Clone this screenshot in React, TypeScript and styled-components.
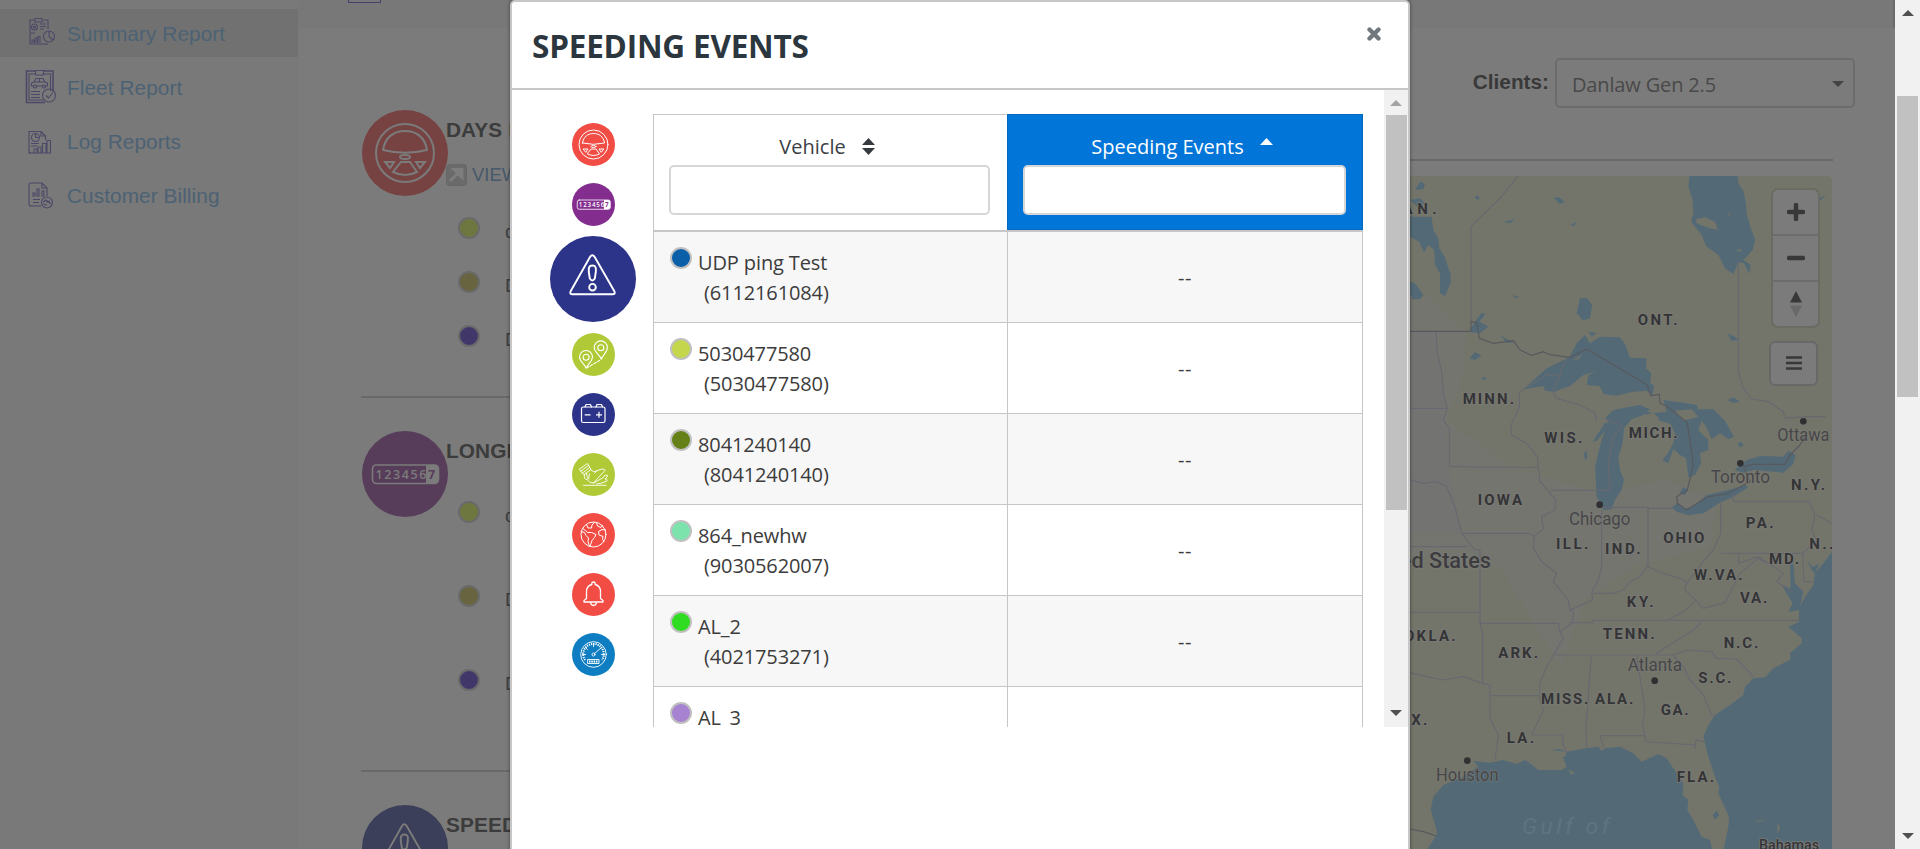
import React from "react";
import styled, { createGlobalStyle } from "styled-components";

const GlobalStyle = createGlobalStyle`
  * { box-sizing: border-box; }
  body { margin: 0; background: #7b7b7b; overflow: hidden; }
`;

const UI = `"Open Sans", "Noto Sans", sans-serif`;
const ARIAL = `"Liberation Sans", Arial, sans-serif`;

/* ---------- page shell ---------- */

const Screen = styled.div`
  position: relative;
  display: flex;
  width: 1920px;
  height: 849px;
  overflow: hidden;
  background: #7b7b7b;
  font-family: ${ARIAL};
`;

const Sidebar = styled.nav`
  display: flex;
  flex-direction: column;
  gap: 6px;
  width: 298px;
  padding-top: 9px;
  background: #797979;
  flex: none;
`;

const NavItem = styled.a<{ $active?: boolean }>`
  display: flex;
  align-items: center;
  height: 48px;
  padding-left: 25px;
  gap: 10px;
  font-size: 20.8px;
  line-height: 24px;
  letter-spacing: 0.07px;
  color: #4c6274;
  background: ${(p) => (p.$active ? "#717171" : "transparent")};
  span { padding-top: 2px; }
`;

const NavIcon = styled.svg`
  width: 32px;
  height: 36px;
  flex: none;
  fill: none;
  stroke: #4c4968;
  stroke-width: 1.1;
`;

const Main = styled.main`
  display: flex;
  flex-direction: column;
  width: 1597px;
  flex: none;
`;

const TopStrip = styled.div`
  height: 28px;
  flex: none;
  padding-left: 50px;
  background: #787878;
  border-right: 2px solid #6b6b6b;
`;

const StripBox = styled.div`
  width: 33px;
  height: 3px;
  border: 1px solid #46426b;
  border-top: 0;
`;

const Columns = styled.div`
  display: flex;
  height: 821px;
`;

const Reports = styled.div`
  width: 941px;
  padding: 49px 0 0 63px;
  flex: none;
`;

const Section = styled.section<{ $height: number }>`
  display: flex;
  height: ${(p) => p.$height}px;
  padding: 33px 0 0 1px;
  border-bottom: 2px solid #696969;
`;

const SectionBody = styled.div`
  padding-top: 8px;
  margin-left: -2px;
`;

const SectionTitle = styled.h3`
  margin: 0;
  font-size: 20.8px;
  line-height: 24px;
  letter-spacing: 0.1px;
  color: #3c3c3c;
  white-space: nowrap;
`;

const ViewRow = styled.a`
  display: flex;
  gap: 5px;
  height: 22px;
  margin-top: 22px;
  margin-bottom: 8px;
  font-size: 18.4px;
  line-height: 21px;
  color: #47586a;
`;

const List = styled.ul<{ $gap: number }>`
  list-style: none;
  margin: 0;
  padding: 7px 0 0 12px;
  li {
    display: flex;
    align-items: center;
    gap: 25px;
    height: ${(p) => p.$gap}px;
    font-size: 19px;
    color: #3f3f3f;
  }
  li span { padding-top: 8px; }
`;

const Dot = styled.i<{ $color: string; $border?: string }>`
  display: block;
  width: 22px;
  height: 22px;
  flex: none;
  border-radius: 50%;
  border: 2px solid ${(p) => p.$border || "#6a6a6a"};
  background: ${(p) => p.$color};
`;

const Right = styled.div`
  display: flex;
  flex-direction: column;
  width: 656px;
  padding-top: 30px;
`;

const ClientRow = styled.div`
  display: flex;
  align-items: center;
  justify-content: flex-end;
  gap: 6px;
  height: 50px;
  padding-right: 40px;
`;

const ClientLabel = styled.label`
  font-weight: 700;
  font-size: 20.8px;
  line-height: 24px;
  padding-bottom: 2px;
  color: #393939;
`;

const Select = styled.div`
  display: flex;
  align-items: center;
  justify-content: space-between;
  width: 300px;
  height: 50px;
  padding: 2px 9px 0 15px;
  border: 2px solid #6c6c6c;
  border-radius: 5px;
  font-family: ${UI};
  font-size: 20px;
  letter-spacing: -0.15px;
  color: #494949;
`;

const Rule = styled.hr`
  width: 534px;
  height: 2px;
  margin: 51px 0 15px 60px;
  border: 0;
  background: #686868;
`;

const MapPanel = styled.div`
  width: 532px;
  height: 673px;
  margin-left: 61px;
  border-radius: 0 5px 0 0;
  overflow: hidden;
  position: relative;
  svg.chart { display: block; }
`;

const MapControls = styled.div`
  position: absolute;
  top: 12px;
  right: 12px;
  width: 49px;
`;

const ZoomGroup = styled.div`
  display: flex;
  flex-direction: column;
  height: 140px;
  border: 2px solid #6a6b62;
  border-radius: 7px;
  overflow: hidden;
  background: #7b7b7b;
`;

const MapButton = styled.div`
  display: flex;
  align-items: center;
  justify-content: center;
  height: 46px;
  border-bottom: 2px solid #6d6d6d;
  &:last-child { border-bottom: 0; height: 44px; }
`;

const MenuButton = styled.div`
  display: flex;
  align-items: center;
  justify-content: center;
  width: 49px;
  height: 45px;
  margin: 13px 0 0 -2px;
  padding-bottom: 1px;
  border: 2px solid #686868;
  border-radius: 6px;
  background: #7b7b7b;
`;

const PageScroll = styled.div`
  display: flex;
  flex-direction: column;
  justify-content: space-between;
  align-items: center;
  width: 25px;
  height: 849px;
  padding: 10px 0;
  background: #f1f1f1;
  flex: none;
`;

const Thumb = styled.div<{ $height: number; $top: number }>`
  width: 21px;
  height: ${(p) => p.$height}px;
  margin-top: ${(p) => p.$top}px;
  margin-bottom: auto;
  background: #c1c1c1;
`;

/* ---------- modal ---------- */

const Modal = styled.div`
  position: absolute;
  left: 510px;
  top: 0;
  width: 900px;
  height: 900px;
  background: #fff;
  border: 2px solid #c6c6c6;
  border-radius: 5px;
  box-shadow: 0 0 3px 1px rgba(0, 0, 0, 0.3);
  font-family: ${UI};
`;

const ModalHeader = styled.header`
  display: flex;
  justify-content: space-between;
  height: 88px;
  padding: 22px 27px 0 20px;
  border-bottom: 2px solid #c6c6c6;
`;

const ModalTitle = styled.h1`
  margin: 0;
  font-size: 31.5px;
  line-height: 44px;
  letter-spacing: -0.2px;
  font-weight: 700;
  color: #2c363e;
`;

const Close = styled.svg`
  width: 14px;
  height: 14px;
  margin-top: 3px;
`;

const ModalBody = styled.div`
  display: flex;
  height: 637px;
  overflow: hidden;
`;

const IconRail = styled.div`
  display: flex;
  flex-direction: column;
  align-items: center;
  gap: 17px;
  width: 141px;
  padding: 33px 0 0 21px;
  flex: none;
`;

const RailIcon = styled.svg<{ $large?: boolean }>`
  display: block;
  width: ${(p) => (p.$large ? 86 : 43)}px;
  height: ${(p) => (p.$large ? 86 : 43)}px;
  margin: ${(p) => (p.$large ? "-7px 0 -6px" : "0")};
  flex: none;
  fill: none;
  stroke: #fff;
  stroke-linecap: round;
  stroke-linejoin: round;
`;

const BackIcon = styled(RailIcon)`
  margin: 0;
  stroke: #7b7b7b;
`;

const Table = styled.div`
  display: flex;
  flex-direction: column;
  width: 710px;
  margin-top: 24px;
  flex: none;
`;

const TableRow = styled.div<{ $striped?: boolean }>`
  display: grid;
  grid-template-columns: 354px 356px;
  height: 91px;
  flex: none;
  border-bottom: 1px solid #c6c6c6;
  border-right: 1px solid #c6c6c6;
  background: ${(p) => (p.$striped ? "#f7f7f7" : "#fff")};
`;

const HeadRow = styled(TableRow)`
  height: 118px;
  border-bottom: 2px solid #c6c6c6;
  border-right: 0;
`;

const HeadCell = styled.div<{ $sorted?: boolean }>`
  display: flex;
  flex-direction: column;
  padding: 17px 16px 0 ${(p) => (p.$sorted ? 15 : 15)}px;
  border: 1px solid ${(p) => (p.$sorted ? "#0267bf" : "#c6c6c6")};
  border-right-color: ${(p) => (p.$sorted ? "#0267bf" : "transparent")};
  border-bottom-width: ${(p) => (p.$sorted ? 1 : 0)}px;
  background: ${(p) => (p.$sorted ? "#0275d8" : "#fff")};
  color: ${(p) => (p.$sorted ? "#fff" : "#3b4045")};
`;

const HeadLabel = styled.div`
  display: flex;
  align-items: center;
  justify-content: center;
  gap: 16px;
  height: 28px;
  margin-bottom: 5px;
  padding-right: 5px;
  font-size: 20px;
`;

const Filter = styled.input`
  width: 100%;
  height: 50px;
  border: 2px solid #d6d6d6;
  border-radius: 5px;
  background: #fff;
`;

const Cell = styled.div`
  display: flex;
  gap: 6px;
  padding: 15px 0 0 16px;
  border-left: 1px solid #c6c6c6;
  font-size: 20px;
  line-height: 30px;
  letter-spacing: -0.12px;
  color: #3c3c3c;
`;

const ValueCell = styled(Cell)`
  align-items: center;
  justify-content: center;
  padding: 1px 1px 0 0;
  letter-spacing: 0.6px;
`;

const VehicleName = styled.div`
  padding-top: 1px;
  div + div { padding-left: 6px; }
`;

const BodyScroll = styled.div`
  display: flex;
  flex-direction: column;
  align-items: center;
  width: 24px;
  height: 637px;
  margin-left: auto;
  padding: 10px 0 11px;
  background: #f1f1f1;
`;

const ArrowSvg = styled.svg`
  flex: none;
`;

const Arrow = ({ color, down }: { color: string; down?: boolean }) => (
  <ArrowSvg width="12" height="6" viewBox="0 0 12 6">
    <path d={down ? "M0 0H12L6 6Z" : "M0 6H12L6 0Z"} fill={color} />
  </ArrowSvg>
);

/* ---------- icons ---------- */

const steering = (
  <g strokeWidth="2">
    <circle r="29" />
    <path d="M-22 -3C-20 -16 -11 -22 0 -22S20 -16 22 -3Q0 2.500 -22 -3Z" />
    <ellipse cy="4" rx="5" ry="2" />
    <path d="M-4 9H5L12 19Q0 25 -12 19ZM-20 9H-11L-15 15ZM20 9H11L15 15Z" strokeLinejoin="miter" />
  </g>
);

const odometer = (ink: string, bg: string) => (
  <g strokeWidth="1.600">
    <rect x="-32.500" y="-9" width="66" height="18.500" rx="4" />
    <path d="M21 -9H29.500Q33.500 -9 33.500 -5V5.500Q33.500 9.500 29.500 9.500H21Z" fill={ink} stroke="none" />
    <text x="-29.500" y="4.800" fill={ink} stroke="none" fontFamily="Open Sans" fontWeight="600" fontSize="12.500" textLength="51">
      123456
    </text>
    <text x="23" y="4.800" fill={bg} stroke="none" fontFamily="Open Sans" fontWeight="700" fontSize="12.500">
      7
    </text>
  </g>
);

const alertSign = (
  <g strokeWidth="1.900">
    <path d="M-3 -22Q-0.700 -25.500 1.700 -22L21.500 12.500Q22.500 15.300 19.500 15.300H-20.500Q-23.500 15.300 -22.500 12.500Z" />
    <path d="M-0.700 -13.500C3 -13.500 3.200 -11 2.800 -7L1.800 -0.500Q-0.700 3.500 -3.200 -0.500L-4.200 -7C-4.500 -11 -4 -13.500 -0.700 -13.500Z" />
    <circle cx="-0.500" cy="8.200" r="3.300" />
  </g>
);

const pins = (
  <g strokeWidth="1.100">
    <path d="M-7.300 13.800C-9 9 -14 7 -14 2.500A6.500 6.500 0 0 1 -1 2.500C-1 7 -5.500 9 -7.300 13.800Z" />
    <circle cx="-7.400" cy="2.700" r="3" />
    <path d="M7.800 4.800C6 0 0.700 -2.500 0.700 -7A6.600 6.600 0 0 1 13.900 -7C13.900 -2.500 9.500 0 7.800 4.800Z" />
    <circle cx="7.300" cy="-6.800" r="3" />
    <path d="M-6.500 13.300L7 5.500" strokeDasharray="2.400 1.600" />
  </g>
);

const battery = (
  <g strokeWidth="1.200">
    <rect x="-12" y="-7.500" width="23.500" height="15.500" rx="1.800" />
    <path d="M-8.500 -7.500L-7.500 -10H-3L-2 -7.500M2.500 -7.500L3.500 -10H8L9 -7.500" />
    <path d="M-8.800 0.300H-3M2.500 0.300H8.500M5.500 -2.700V3.300" strokeLinecap="butt" />
  </g>
);

const pedal = (
  <g strokeWidth="0.900">
    <path d="M-14 -5.500L-6 -11L-2.500 -5L-9.500 0ZM-12.500 -3.500L-5.200 -9M-11 -1.500L-4 -7" />
    <path d="M-9 0Q-10 5 -6.500 5Q-4 3.500 -4 -0.500M-7 -1.500Q-7 3 -4.500 4.500M-3 -5Q0 -1.500 4 -4L8.500 -5.500Q12 -5.500 11.500 -4L4 4L0 8.500Q-4 9 -6.500 5M4 -4L1 -1.500" />
    <path d="M0 8.500L10 3L10.500 1.500Q12 0 14 1Q14 3 11.500 4.500Q14 4 13.500 6.500Q9 9 3 9.500M-10 10.800H12.500" />
  </g>
);

const globe = (
  <g strokeWidth="1">
    <circle r="12.500" />
    <path d="M-11 -6L-8 -4L-6 -2L-2 -2L2.500 0L1 3L-1.500 6L-3.500 12M-12.400 -3L-9 -2L-7.500 1L-5 3.500L-5.500 7L-4 12" />
    <path d="M-7 -10L-5.500 -6.500L-2 -6.500L-1.500 -9.500L1 -12.300M3 -12L4 -8.500L7.500 -7L9 -9M12 -4.500L8.500 -5L5 -3L5.500 0.500L9.500 2L9 5L10.500 7" />
  </g>
);

const bell = (
  <g strokeWidth="1.300">
    <path d="M-9.500 7.500V6L-7 4V-3Q-7 -8.500 -1.700 -10V-11.500Q0 -13.500 1.700 -11.500V-10Q7 -8.500 7 -3V4L9.500 6V7.500ZM-3 8Q-2.500 11 0 11T3 8" />
  </g>
);

const gauge = (
  <g strokeWidth="0.900">
    <circle r="12.800" />
    <path d="M-8.500 5.500A10.300 10.300 0 1 1 8.500 5.500" strokeWidth="2" strokeDasharray="1.200 1" strokeLinecap="butt" />
    <path d="M1 -1L7.500 -6.500M-11 0H-8M8 0H11M0 -11V-8M-8 -7L-6 -5" />
    <circle r="1.500" />
    <rect x="-5.500" y="5" width="11" height="4" />
    <path d="M-4.500 7H5" strokeWidth="2.200" strokeDasharray="1.500 0.800" strokeLinecap="butt" />
  </g>
);

const rail: { color: string; art: React.ReactNode; scale: number; large?: boolean }[] = [
  { color: "#f14d45", art: steering, scale: 86 },
  { color: "#832e8f", art: odometer("#fff", "#832e8f"), scale: 86 },
  { color: "#2c348a", art: alertSign, scale: 86, large: true },
  { color: "#afca36", art: pins, scale: 43 },
  { color: "#2c348a", art: battery, scale: 43 },
  { color: "#afca36", art: pedal, scale: 43 },
  { color: "#f14d45", art: globe, scale: 43 },
  { color: "#f14d45", art: bell, scale: 43 },
  { color: "#0f7dc2", art: gauge, scale: 43 },
];

const box = (s: number) => `${-s / 2} ${-s / 2} ${s} ${s}`;

const SectionIcon = ({ color, children }: { color: string; children: React.ReactNode }) => (
  <BackIcon $large viewBox={box(86)}>
    <circle r="43" fill={color} stroke="none" />
    {children}
  </BackIcon>
);

const navItems = [
  {
    label: "Summary Report",
    art: (
      <>
        <path d="M10 5H5V29H23M18 5H23V14M10 3.500H17V7H10Z" />
        <circle cx="9.500" cy="12" r="3" /><circle cx="9.500" cy="12" r="1" />
        <path d="M15 9H21M15 11.500H21M15 14H19M6 18H10M7 28V25H9V28M10 28V23H12V28M13 28V21.500H15V28" />
        <circle cx="24" cy="21.500" r="5.500" /><path d="M24 16V21.500L28 25" />
      </>
    ),
  },
  {
    label: "Fleet Report",
    art: (
      <>
        <path d="M10 2H1.500V33.500H20M19 2H28V23" strokeWidth="1.600" />
        <path d="M10 5H4V31H19M19 5H25.500V22M10.500 1.500H18.500V6H10.500Z" />
        <path d="M6.500 17V14L9 13L11 9.500H18L20 13L22.500 14V17H20M17.500 17H11.500M9 17H6.500M9 13H20M14.500 9.500V13" />
        <circle cx="10" cy="17.500" r="1.500" /><circle cx="19" cy="17.500" r="1.500" />
        <path d="M6 22.500H15M6 25.500H15M6 28.500H15" />
        <circle cx="24" cy="26.500" r="6.500" /><path d="M21 26.500L23.500 29L27.500 24" />
      </>
    ),
  },
  {
    label: "Log Reports",
    art: (
      <>
        <path d="M6 30H4V8.500H16L20.500 13V17M16 8.500V13H20.500" />
        <circle cx="10.500" cy="14.500" r="4" /><path d="M10.500 10.500V14.500H14.500M6 20.500H14M6 23H12M9 30V26H12V30M13 30V24H16V30M17.500 30V20.500H21V30M22 30V17.500H25.500V30H4" />
      </>
    ),
  },
  {
    label: "Customer Billing",
    art: (
      <>
        <path d="M16 29H6Q4 29 4 27V8Q4 6 6 6H17L22 11V19M17 6V11H22M8 19V16H10V19ZM12 19V12H14V19ZM17 19V14H19V19ZM8 22.500H15M8 25.500H14" />
        <circle cx="22" cy="25.500" r="5.500" /><path d="M18 25L21 23L26 27M18 27L22 28M21 25L25 24" />
      </>
    ),
  },
];

/* ---------- map ---------- */

const lakes = [
  "M30 650H95L100 690L115 715L118 745L134 770L150 820H152V850L135 888L120 880V820L105 795L102 750L85 735L72 758L58 725L-10 690Z",
  "M45 570L60 545L75 552L70 568ZM30 600L60 595L75 610L50 618ZM30 845L45 850L70 885L60 898H38L30 880Z",
  "M868 528H1013L1015 550L1030 572L1038 610L1040 640L1052 685L1066 720L1058 750L1040 770L1030 780L1052 795L1048 822L1032 790L1015 787L1000 822L975 805L955 765L918 738L905 705L873 665L880 640L878 600L865 560Z",
  "M370 1168L440 1105L508 1072L530 1030L555 1005L570 1030L600 1010L660 1012L675 1032L690 1073L740 1075L738 1105L754 1120L750 1150L763 1157L757 1185L740 1172L700 1175L650 1187L612 1183L598 1158L560 1155L565 1125L590 1113L550 1125L510 1158L462 1175L435 1172L430 1158Z",
  "M565 995L590 998L575 1010ZM540 895L560 893L577 915L570 955L550 962L530 940ZM460 593L478 592L494 606L480 612ZM310 666L345 658L330 670ZM510 674L530 667L522 678ZM224 592L232 586L240 594L232 600ZM335 885L357 890L345 894ZM245 938L256 942L238 965L265 980L240 1000L207 995L225 965ZM300 1005L320 1018L345 1027L320 1028ZM208 1075L225 1057L245 1066L225 1080ZM243 1134L252 1130L260 1137L252 1141ZM982 1000L1000 1008L1018 1020L995 1022ZM982 1200L1000 1192L1020 1205L1000 1208ZM1172 565L1186 564L1180 574ZM1255 595L1278 586L1260 602Z",
  "M605 1320L625 1262L615 1255L640 1230L690 1220L720 1215L750 1228L730 1245L695 1258L672 1285L668 1330L655 1370L660 1410L672 1440L665 1470L645 1500L635 1528L610 1530L603 1510L590 1490L585 1400L592 1370Z",
  "M578 1325L615 1268L632 1272L590 1322ZM552 1360L560 1350L562 1372L556 1383Z",
  "M690 1222L760 1240L800 1235L790 1200L850 1208L890 1215L895 1228L940 1228L975 1262L1002 1310L985 1318L960 1300L935 1318L918 1280L905 1262L895 1290L925 1320V1350L900 1360L903 1390L885 1425L865 1432L858 1375L840 1365L820 1347L805 1390L787 1380L800 1365L820 1330L825 1300L812 1272L780 1262Z",
  "M838 1480L850 1462L865 1470L855 1485ZM1012 1332L1022 1325L1032 1335L1020 1342Z",
  "M815 1522L835 1508L850 1526L880 1520L920 1485L985 1470L1035 1455L1045 1462L1000 1490L960 1508L910 1540L865 1546L830 1535Z",
  "M1003 1410L1040 1380L1080 1368L1150 1370L1165 1352L1187 1365L1180 1392L1150 1418L1060 1410L1030 1418Z",
  "M1300 1650L1270 1690L1245 1720L1240 1755L1215 1790L1197 1825V1865L1165 1880L1205 1915V1930L1170 1960L1172 1978L1120 2005L1095 2032L1060 2035L1035 2060L1030 2085L990 2115L945 2145L925 2175L910 2210L925 2270L945 2330L958 2360L955 2380L987 2450L985 2480L970 2550H1300Z",
  "M937 2550L930 2520L905 2510L880 2460L862 2430L865 2400L848 2385L850 2350L830 2320L800 2275L775 2262L725 2285L700 2260L660 2240L615 2245L605 2253L595 2240L560 2245L500 2255L480 2248L450 2250L490 2275L500 2300L485 2310L415 2310L390 2290L375 2280L350 2292L310 2280L270 2288L220 2283L235 2300L190 2330L130 2355L100 2390L92 2430L110 2490V2505L80 2550Z",
  "M1170 1690L1180 1690L1185 1750L1210 1775L1198 1830L1165 1835L1178 1810L1145 1755L1172 1765ZM1220 1680L1238 1702L1258 1690L1245 1722L1235 1710ZM938 2445L950 2432L958 2445L945 2460Z",
];

const borders = [
  "M354 528L300 595L213 680V965M1015 790V1115L1030 1165L1055 1197L1105 1205L1150 1235L1155 1255L1215 1250L1278 1250",
  "M108 995L112 1060L125 1115L130 1180L142 1225L130 1260L148 1285V1400M30 1225H142",
  "M148 1400L415 1402M415 1402L412 1370L380 1330L335 1305L333 1275L358 1222V1180L370 1168L440 1125H480L500 1072M480 1125L458 1175L470 1195L540 1215L585 1240L590 1260",
  "M415 1402L420 1445L468 1500L465 1530L425 1550L430 1585L403 1610L400 1645L425 1685L470 1720L460 1745L505 1800L510 1830L522 1840L515 1870L480 1895",
  "M30 1440L70 1450L110 1445L140 1460L165 1520L175 1560L185 1600L225 1650H240V1870M185 1600H390L403 1610M30 1640H205M30 1837H240",
  "M452 1471H630L625 1390L640 1310L668 1275L620 1262M605 1530V1700L595 1740L575 1775L578 1800L510 1830M605 1522H744V1700L740 1700L720 1730L690 1745L670 1770L640 1780L580 1780M744 1525H815",
  "M744 1700L790 1720L840 1735L858 1745L860 1750L905 1690L940 1650L962 1600V1510M962 1660H1208L1212 1745H1240M1000 1480V1505H1228L1245 1545L1235 1590L1250 1620L1208 1660M1250 1545L1296 1570",
  "M860 1745L855 1770L888 1802L850 1835L800 1862M888 1802L910 1825L975 1808L1020 1720L1075 1675L1100 1690M1016 1660V1690L1075 1670L1150 1720L1130 1745L1175 1775",
  "M240 1870H475L480 1895M510 1868H578V1861H1197M905 1865L880 1890L800 1940L770 1960V1965",
  "M240 1870L248 1900V2050L270 2055V2155L295 2205L285 2280M270 2087H415M30 2018L80 2030L130 2040L190 2030L248 2050",
  "M480 1895L490 1915L460 1965L440 2000L420 2050L418 2090L430 2130L395 2205H490L487 2230L500 2255M465 1965H820L865 1950L935 1955L950 1975L1010 1977L1062 2032",
  "M574 1965L558 2180L560 2245M710 1965L735 2130L728 2175L738 2225L885 2235V2245L888 2220L912 2225M600 2207H732M820 1965L850 2000L870 2040L910 2085L935 2145H945M600 2207L610 2240",
];

const national = [
  "M-100 994H213V965L230 968L238 1015L280 1030L340 1022L360 1050L395 1066L430 1055L450 1064L510 1072L560 1047L742 1155L752 1187L778 1183L780 1210L800 1218L862 1268L880 1395L862 1470L830 1490L832 1510L860 1530L920 1492L985 1480L1050 1445L1030 1400L1060 1393H1155L1170 1365L1200 1335L1215 1310",
  "M30 2487L70 2495L110 2508",
];

const states: [string, number, number, number][] = [
  ["MAN.", -46, 643, 156], ["ONT.", 713, 974, 120], ["MINN.", 188, 1211, 154], ["WIS.", 433, 1329, 114],
  ["MICH.", 686, 1314, 147], ["IOWA", 233, 1515, 133], ["N.Y.", 1173, 1469, 102], ["PA.", 1037, 1584, 84],
  ["OHIO", 790, 1630, 123], ["ILL.", 468, 1648, 97], ["IND.", 615, 1662, 107], ["N..", 1228, 1647, 72],
  ["MD.", 1107, 1692, 90], ["W.VA.", 882, 1740, 146], ["VA.", 1020, 1810, 82], ["KY.", 680, 1820, 81],
  ["TENN.", 608, 1917, 156], ["OKLA.", 12, 1923, 155], ["ARK.", 295, 1974, 119], ["N.C.", 971, 1945, 104],
  ["S.C.", 895, 2048, 99], ["MISS.", 423, 2112, 142], ["ALA.", 585, 2112, 115], ["GA.", 782, 2144, 84],
  ["TEX.", -32, 2176, 114], ["LA.", 320, 2229, 82], ["FLA.", 830, 2347, 112],
];

const cities: [string, number, number, number, number, number][] = [
  ["Ottawa", 1132, 1323, 156, 1210, 1264], ["Toronto", 932, 1450, 178, 1021, 1390],
  ["Chicago", 507, 1574, 184, 599, 1514], ["Atlanta", 683, 2014, 163, 764, 2042],
  ["Houston", 108, 2342, 188, 202, 2282],
];

const MapDrawing = () => (
  <svg className="chart" width="532" height="673" viewBox="-300 528 1596 2019">
    <rect x="-300" y="528" width="1596" height="2019" fill="#74756a" />
    <path d="M-100 900L90 890L200 1000L185 1150L140 1260L330 1400L600 1480L800 1440L950 1500L930 1640L700 1700L560 1800L480 2000L300 1700L-100 1650Z" fill="#75756f" />
    <path d="M30 995H108L130 1180L145 1400L180 1600H30Z" fill="#737472" />
    <g fill="#536a76">
      {lakes.map((d) => <path key={d} d={d} />)}
    </g>
    <g fill="#74756a">
      <path d="M888 658L915 652L945 665L953 690L925 683L890 670ZM988 635L992 655L986 645ZM1008 752L1022 746L1024 755Z" />
      <path d="M518 1080L548 1062L535 1078ZM735 1245L760 1238L780 1258L740 1262ZM825 1232L875 1228L895 1250L850 1262Z" />
      <path d="M1060 2463L1095 2461L1080 2465ZM1133 2470L1140 2480L1132 2502Z" />
      <path d="M445 2250L500 2255L495 2270L470 2275ZM505 2308L523 2318L515 2325Z" />
    </g>
    <g fill="none" stroke="#686870" strokeWidth="3.500" strokeLinejoin="round">
      {borders.map((d) => <path key={d} d={d} />)}
    </g>
    <g fill="none" stroke="#58595e" strokeWidth="3.500" strokeLinejoin="round">
      {national.map((d) => <path key={d} d={d} />)}
    </g>
    <g fontFamily="Roboto, sans-serif" paintOrder="stroke" stroke="#7b7b77" strokeWidth="5" strokeLinejoin="round">
      <g fontSize="45" fontWeight="700" fill="#343436">
        {states.map(([t, x, y, w]) => <text key={t + x} x={x} y={y} textLength={w}>{t}</text>)}
      </g>
      <g fontSize="54" fill="#464648" strokeWidth="3">
        {cities.map(([t, x, y, w]) => (
          <text key={t} x={x} y={y} textLength={w} lengthAdjust="spacingAndGlyphs">{t}</text>
        ))}
      </g>
      <text x="273" y="1704" textAnchor="end" fontSize="65" fontWeight="500" fill="#3c3c3f">United States</text>
      <text x="1077" y="2550" fontSize="43" fontWeight="500" fill="#343436" textLength="180">Bahamas</text>
    </g>
    <text x="366" y="2502" fontFamily="Roboto, sans-serif" fontStyle="italic" fontSize="68" fill="#5f7480" textLength="262">Gulf of</text>
    <g fill="#303032">
      {cities.map(([t, , , , x, y]) => <circle key={t} cx={x} cy={y} r="10" />)}
    </g>
  </svg>
);

/* ---------- data ---------- */

const vehicles = [
  { name: "UDP ping Test", id: "6112161084", color: "#0b5ea8" },
  { name: "5030477580", id: "5030477580", color: "#c3d64c" },
  { name: "8041240140", id: "8041240140", color: "#658016" },
  { name: "864_newhw", id: "9030562007", color: "#7ce3ad" },
  { name: "AL_2", id: "4021753271", color: "#30dc21" },
  { name: "AL_3", id: "", color: "#a682d0" },
];

const dotColors = ["#6f7740", "#67643f", "#413769"];
const listItems = ["dan", "Demo", "Danlaw"];

const ReportList = ({ gap }: { gap: number }) => (
  <List $gap={gap}>
    {dotColors.map((c, i) => (
      <li key={c}>
        <Dot $color={c} />
        <span>{listItems[i]}</span>
      </li>
    ))}
  </List>
);

export default function App() {
  return (
    <>
      <GlobalStyle />
      <Screen>
        <Sidebar>
          {navItems.map((n, i) => (
            <NavItem key={n.label} $active={i === 0}>
              <NavIcon viewBox="0 0 32 36">{n.art}</NavIcon>
              <span>{n.label}</span>
            </NavItem>
          ))}
        </Sidebar>

        <Main>
          <TopStrip>
            <StripBox />
          </TopStrip>
          <Columns>
            <Reports>
              <Section $height={321}>
                <SectionIcon color="#774342">{steering}</SectionIcon>
                <SectionBody>
                  <SectionTitle>DAYS DRIVEN</SectionTitle>
                  <ViewRow>
                    <svg width="21" height="22" viewBox="0 0 21 22">
                      <rect x="0.500" y="0.500" width="20" height="21" rx="3" fill="#6a6a6a" stroke="#676767" />
                      <path d="M4 17L13 8M8 5.500H16V13.500Z" stroke="#7d7d7d" strokeWidth="3" fill="#7d7d7d" />
                    </svg>
                    VIEW
                  </ViewRow>
                  <ReportList gap={54} />
                </SectionBody>
              </Section>
              <Section $height={374}>
                <SectionIcon color="#573d5a">{odometer("#7b7b7b", "#573d5a")}</SectionIcon>
                <SectionBody>
                  <SectionTitle>LONGEST TRIP</SectionTitle>
                  <ReportList gap={84} />
                </SectionBody>
              </Section>
              <Section $height={374}>
                <SectionIcon color="#3c3f59">{alertSign}</SectionIcon>
                <SectionBody>
                  <SectionTitle>SPEEDING EVENTS</SectionTitle>
                </SectionBody>
              </Section>
            </Reports>

            <Right>
              <ClientRow>
                <ClientLabel>Clients:</ClientLabel>
                <Select>
                  Danlaw Gen 2.5
                  <Arrow color="#434343" down />
                </Select>
              </ClientRow>
              <Rule />
              <MapPanel>
                <MapDrawing />
                <MapControls>
                  <ZoomGroup>
                    <MapButton>
                      <svg width="18" height="18" viewBox="0 0 18 18">
                        <path d="M9 2V16M2 9H16" stroke="#383838" strokeWidth="4.500" strokeLinecap="round" />
                      </svg>
                    </MapButton>
                    <MapButton>
                      <svg width="18" height="18" viewBox="0 0 18 18">
                        <path d="M2 9H16" stroke="#383838" strokeWidth="4.500" strokeLinecap="round" />
                      </svg>
                    </MapButton>
                    <MapButton>
                      <svg width="12" height="26" viewBox="0 0 12 26">
                        <path d="M0 11.500H12L6 0Z" fill="#383838" />
                        <path d="M0 14.500H12L6 26Z" fill="#686868" />
                      </svg>
                    </MapButton>
                  </ZoomGroup>
                  <MenuButton>
                    <svg width="16" height="14" viewBox="0 0 16 14">
                      <path d="M0 1.500H16M0 7H16M0 12.500H16" stroke="#383838" strokeWidth="2.500" />
                    </svg>
                  </MenuButton>
                </MapControls>
              </MapPanel>
            </Right>
          </Columns>
        </Main>

        <PageScroll>
          <Arrow color="#505050" />
          <Thumb $height={301} $top={80} />
          <Arrow color="#505050" down />
        </PageScroll>

        <Modal>
          <ModalHeader>
            <ModalTitle>SPEEDING EVENTS</ModalTitle>
            <Close viewBox="0 0 14 14">
              <path d="M2.500 2.500L11.500 11.500M11.500 2.500L2.500 11.500" stroke="#70787e" strokeWidth="4.300" strokeLinecap="round" />
            </Close>
          </ModalHeader>
          <ModalBody>
            <IconRail>
              {rail.map((r, i) => (
                <RailIcon key={i} $large={r.large} viewBox={box(r.scale)}>
                  <circle r={r.scale / 2} fill={r.color} stroke="none" />
                  {r.art}
                </RailIcon>
              ))}
            </IconRail>
            <Table>
              <HeadRow>
                <HeadCell>
                  <HeadLabel>
                    Vehicle
                    <svg width="13" height="17" viewBox="0 0 13 17">
                      <path d="M0 7H13L6.500 0ZM0 10H13L6.500 17Z" fill="#363b40" />
                    </svg>
                  </HeadLabel>
                  <Filter />
                </HeadCell>
                <HeadCell $sorted>
                  <HeadLabel>
                    Speeding Events
                    <svg width="13" height="17" viewBox="0 0 13 17">
                      <path d="M0 7H13L6.500 0Z" fill="#fff" />
                    </svg>
                  </HeadLabel>
                  <Filter />
                </HeadCell>
              </HeadRow>
              {vehicles.map((v, i) => (
                <TableRow key={v.name} $striped={i % 2 === 0}>
                  <Cell>
                    <Dot $color={v.color} $border="#c0c0c0" />
                    <VehicleName>
                      <div>{v.name}</div>
                      {v.id && <div>({v.id})</div>}
                    </VehicleName>
                  </Cell>
                  <ValueCell>{v.id && "--"}</ValueCell>
                </TableRow>
              ))}
            </Table>
            <BodyScroll>
              <Arrow color="#a3a3a3" />
              <Thumb $height={395} $top={9} />
              <Arrow color="#505050" down />
            </BodyScroll>
          </ModalBody>
        </Modal>
      </Screen>
    </>
  );
}
